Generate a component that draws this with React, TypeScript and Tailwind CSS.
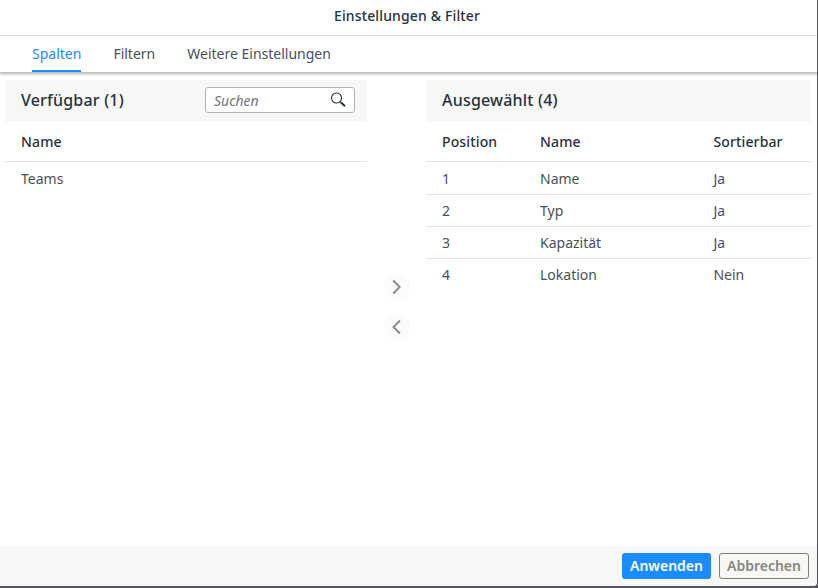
import { useState } from "react";

// datos
const tabs = ["Spalten", "Filtern", "Weitere Einstellungen"];

const available = ["Teams"];

const selected = [
  { name: "Name", sortable: true },
  { name: "Typ", sortable: true },
  { name: "Kapazität", sortable: true },
  { name: "Lokation", sortable: false },
];

function SearchIcon() {
  return (
    <svg width="16" height="16" viewBox="0 0 16 16" fill="none" stroke="#273240">
      <circle cx="6.5" cy="6" r="5" strokeWidth="1.1" />
      <path d="M10 9.5l1.5 1.5" strokeWidth="1.1" />
      <path d="M11 10.5l4 3.7" strokeWidth="2" />
    </svg>
  );
}

function MoveButton({ label, path }: { label: string; path: string }) {
  return (
    <button
      type="button"
      aria-label={label}
      className="flex h-[26px] w-[26px] items-center justify-center rounded-full bg-[#fbfbfb]"
    >
      <svg width="26" height="26" viewBox="0 0 26 26" fill="none" stroke="#84888d" strokeWidth="1.8">
        <path d={path} />
      </svg>
    </button>
  );
}

export default function App() {
  // estados locales
  const [activeTab, setActiveTab] = useState("Spalten");
  const [search, setSearch] = useState("");

  return (
    <div className="h-[588px] w-[818px] overflow-hidden bg-[#57565a] pr-px pb-[2px] font-['Noto_Sans',sans-serif] text-sm leading-5 text-[#48505a]">
      <section className="flex h-full flex-col overflow-hidden rounded-br-[4px] bg-white">
        <header className="flex h-9 shrink-0 items-center justify-center border-b border-[#e8e8e8] pb-[3px] pr-[3px]">
          <h1 className="font-medium tracking-[0.14px] text-[#273240]">Einstellungen &amp; Filter</h1>
        </header>

        <nav className="flex h-[37px] shrink-0 gap-8 border-b border-[#c0c0c0] pl-8 shadow-[0_1px_3px_rgba(0,0,0,0.3)]">
          {tabs.map((tab) => (
            <button
              key={tab}
              type="button"
              onClick={() => setActiveTab(tab)}
              className={
                tab === activeTab
                  ? "h-9 border-b-2 border-[#1a8cff] pt-0.5 text-[#1a8cff]"
                  : "h-9 border-b-2 border-transparent pt-0.5"
              }
            >
              {tab}
            </button>
          ))}
        </nav>

        <main className="flex flex-1 pt-[7px] pr-1.5 pl-[5px]">
          {/* columnas disponibles */}
          <div className="w-[362px]">
            <div className="flex h-[42px] items-center justify-between bg-[#f7f7f5] pr-3 pl-4">
              <h2 className="pb-0.5 text-base font-medium tracking-[0.2px] text-[#273240]">Verfügbar (1)</h2>
              <label className="mb-0.5 flex h-[26px] w-[150px] items-center rounded-[3px] border border-[#b3b3b3] bg-white pr-2 pl-2">
                <input
                  type="text"
                  value={search}
                  onChange={(e) => setSearch(e.target.value)}
                  placeholder="Suchen"
                  className="min-w-0 flex-1 pt-px outline-none placeholder:text-[#757575] placeholder:italic"
                />
                <SearchIcon />
              </label>
            </div>
            <div className="flex h-10 items-center border-b border-[#e3e3e3] pl-4 font-medium tracking-[0.14px] text-[#273240]">
              Name
            </div>
            {available.map((name) => (
              <div key={name} className="flex h-[33px] items-center pt-px pl-4">{name}</div>
            ))}
          </div>

          <div className="flex w-[59px] flex-col items-center gap-3.5 pt-[194px]">
            <MoveButton label="Hinzufügen" path="M9.2 6.5l6.5 6.5-6.5 6.5" />
            <MoveButton label="Entfernen" path="M16 6.5L9.5 13l6.5 6.5" />
          </div>

          {/* columnas seleccionadas */}
          <div className="flex-1">
            <div className="flex h-[42px] items-center bg-[#f7f7f5] pl-4">
              <h2 className="pb-0.5 text-base font-medium tracking-[0.2px] text-[#273240]">Ausgewählt (4)</h2>
            </div>
            <div className="grid h-10 grid-cols-[98px_173.4px_1fr] items-center border-b border-[#e3e3e3] pl-4 font-medium tracking-[0.14px] text-[#273240]">
              <span>Position</span>
              <span>Name</span>
              <span>Sortierbar</span>
            </div>
            <div className="pt-px">
              {selected.map((column, index) => (
                <div
                  key={column.name}
                  className="grid h-8 grid-cols-[98px_173.4px_1fr] items-center border-b border-[#e3e3e3] pl-4 last:border-transparent"
                >
                  <span>{index + 1}</span>
                  <span>{column.name}</span>
                  <span>{column.sortable ? "Ja" : "Nein"}</span>
                </div>
              ))}
            </div>
          </div>
        </main>

        <footer className="flex h-10 shrink-0 items-center justify-end gap-2 bg-[#f7f7f5] pr-2">
          <button type="button" className="h-[26px] w-[89px] rounded-[3px] bg-[#1a8cff] font-semibold text-white">
            Anwenden
          </button>
          <button type="button" className="h-[26px] w-[90px] rounded-[3px] border border-[#7d7d7a] font-semibold text-[#858582]">
            Abbrechen
          </button>
        </footer>
      </section>
    </div>
  );
}
